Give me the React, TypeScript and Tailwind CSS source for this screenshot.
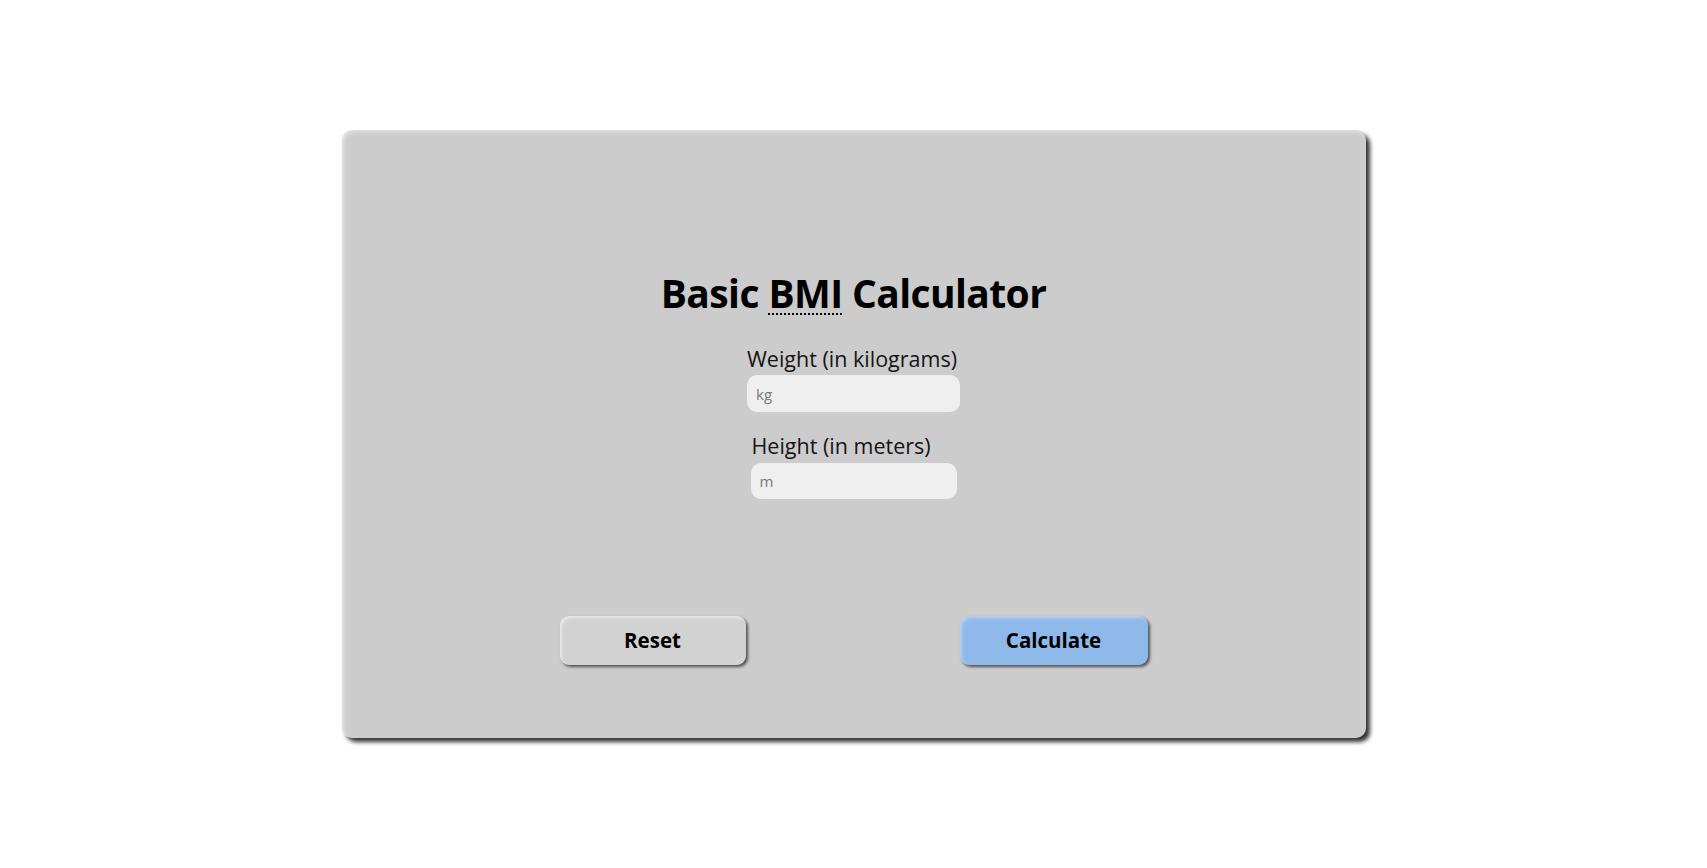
import React from "react";

export default function App() {
  return (
    <div className="min-h-[868px] w-full bg-white pt-[130px] font-['Open_Sans','Noto_Sans',sans-serif]">
      <div className="mx-auto flex h-[608px] w-[1024px] flex-col items-center rounded-[10px] bg-[#cccccc] pt-[139px] shadow-[4px_4px_4px_rgba(0,0,0,0.8),inset_2px_2px_4px_rgba(255,255,255,0.45)]">
        <h1 className="text-[39px] font-bold leading-[48px] tracking-[-0.6px] text-black">
          Basic{" "}
          <abbr title="Body Mass Index" className="underline decoration-dotted decoration-[2px] underline-offset-[5px]">
            BMI
          </abbr>{" "}
          Calculator
        </h1>
        <div className="mt-[30px] flex w-[213px] flex-col items-start">
          <label className="text-[21.5px] leading-[24px] whitespace-nowrap text-[#151515]">
            Weight (in kilograms)
          </label>
          <input
            type="text"
            placeholder="kg"
            className="mt-[4px] h-[37px] w-[213px] rounded-[10px] bg-[#efefef] pl-[9px] text-[15px] text-black outline-none placeholder:text-[#7a7a7a]"
          />
        </div>
        <div className="mt-[22px] flex w-[206px] flex-col items-start">
          <label className="pl-[1px] text-[21.5px] leading-[24px] whitespace-nowrap text-[#151515]">
            Height (in meters)
          </label>
          <input
            type="text"
            placeholder="m"
            className="mt-[5px] h-[36px] w-[206px] rounded-[10px] bg-[#efefef] pl-[9px] text-[15px] text-black outline-none placeholder:text-[#7a7a7a]"
          />
        </div>
        <div className="mt-[117px] flex gap-[214px]">
          <button className="h-[49px] w-[186px] rounded-[9px] bg-[#d2d2d2] text-[20.5px] font-bold text-black shadow-[2px_2px_3px_rgba(0,0,0,0.6),inset_2px_2px_3px_rgba(255,255,255,0.5)]">
            Reset
          </button>
          <button className="h-[49px] w-[188px] rounded-[9px] bg-[#8fb9ea] text-[20.5px] font-bold text-black shadow-[2px_2px_3px_rgba(0,0,0,0.6),inset_2px_2px_3px_rgba(255,255,255,0.35)]">
            Calculate
          </button>
        </div>
      </div>
    </div>
  );
}
